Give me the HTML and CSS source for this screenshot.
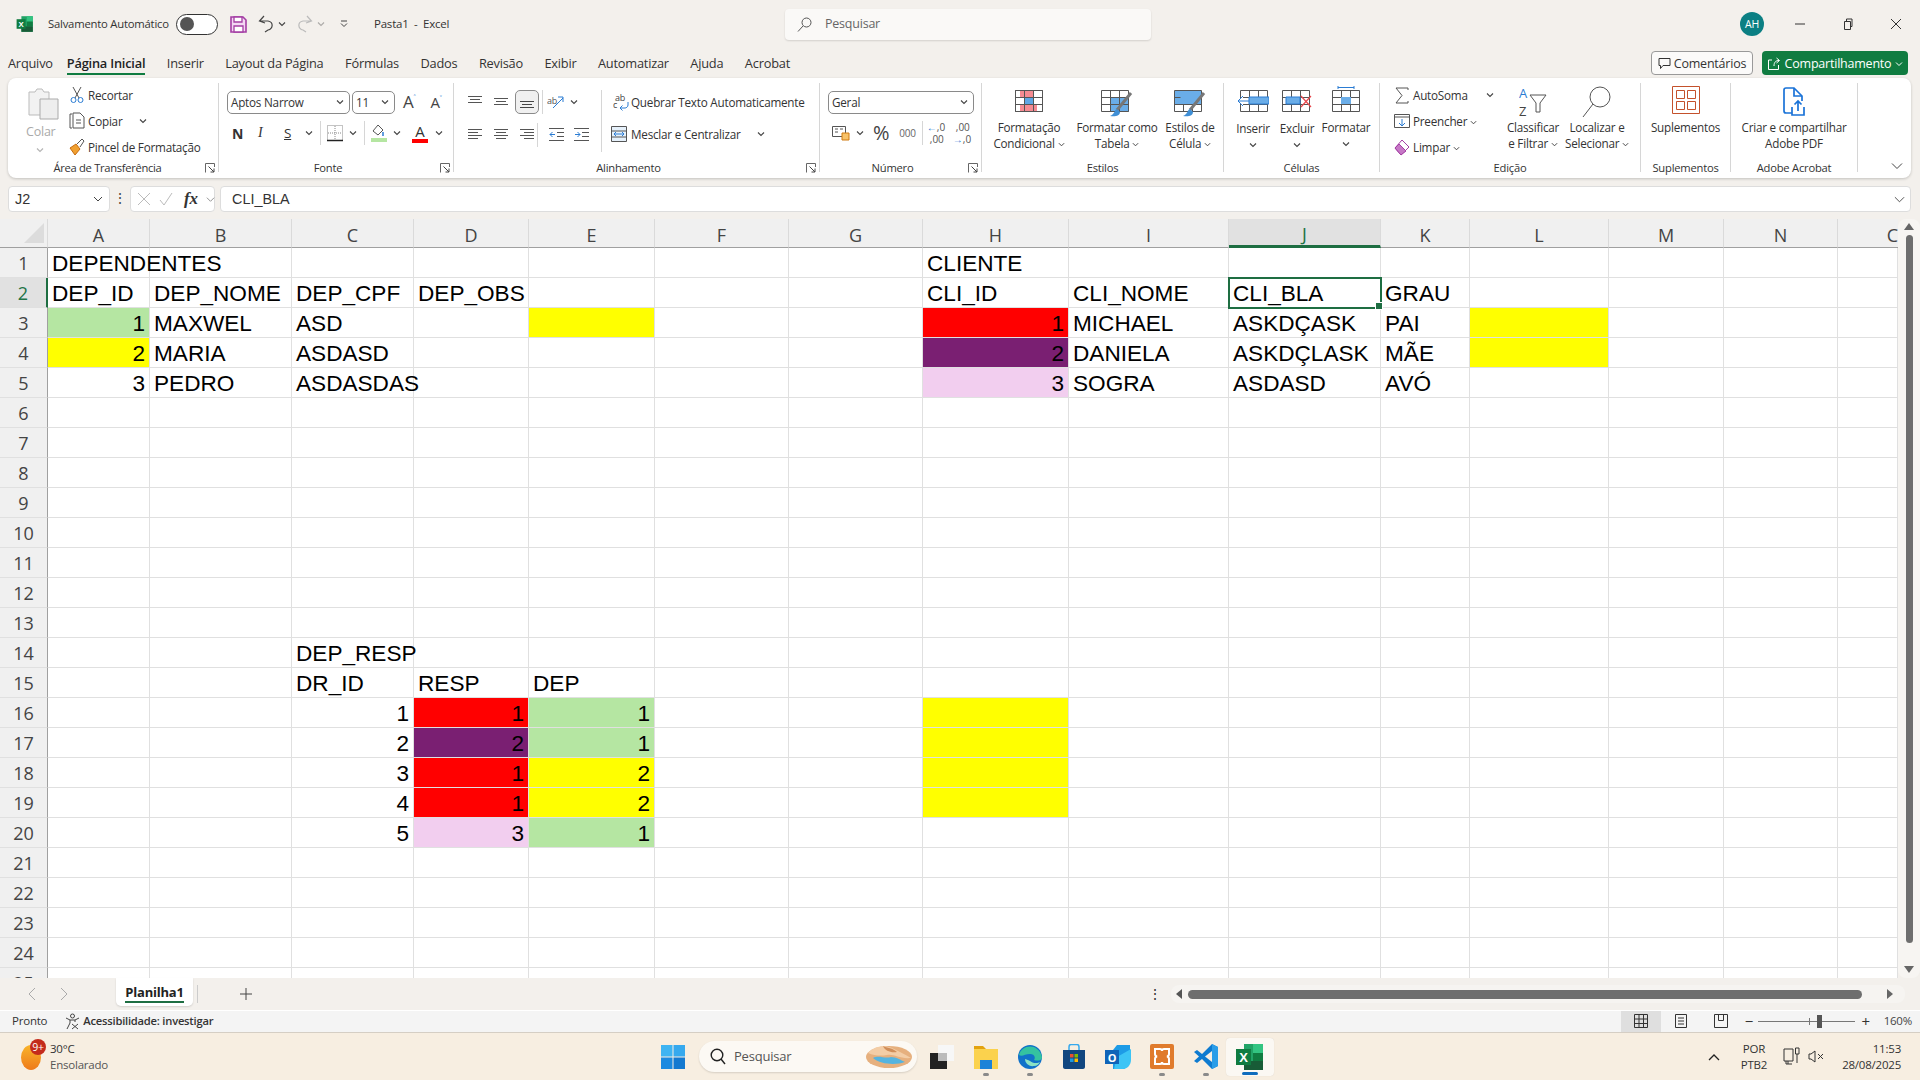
FILE: index.html
```html
<!DOCTYPE html>
<html lang="pt-BR">
<head>
<meta charset="utf-8">
<title>Pasta1 - Excel</title>
<link rel="stylesheet" href="styles.css">
</head>
<body>
<svg class="sprite" width="0" height="0">
<defs>
<symbol id="chev" viewBox="0 0 8 8"><path d="M1 2.5 4 5.5 7 2.5" fill="none" stroke="#444" stroke-width="1.1"/></symbol>
<symbol id="launch" viewBox="0 0 10 10"><path d="M.5 9.5V.5H9.5V4" fill="none" stroke="#666"/><path d="M3.5 3.5 9 9M9 5.5V9H5.5" fill="none" stroke="#444"/></symbol>
<symbol id="xl" viewBox="0 0 30 30"><path d="M9 2h19v26H9z" fill="#21a366"/><path d="M18 2h10v9H18z" fill="#33c481"/><path d="M18 11h10v8H18z" fill="#107c41"/><path d="M9 19h19v9H9z" fill="#185c37"/><path d="M1 7h15v16H1z" fill="#107c41"/><text x="8.5" y="20" class="xltext">X</text></symbol>
<symbol id="grid" viewBox="0 0 28 22"><path d="M.5.5h27v21H.5zM.5 7.5h27M.5 14.5h27M9.5.5v21M18.5.5v21" fill="none" stroke="#555"/></symbol>
</defs>
</svg>

<header class="titlebar">
  <div class="title-left">
    <svg class="xl-small" width="18" height="18"><use href="#xl"/></svg>
    <span class="autosave">Salvamento Automático</span>
    <span class="toggle"><span class="knob"></span></span>
    <svg class="save" width="17" height="17" viewBox="0 0 17 17"><path d="M1 1h12l3 3v12H1z" fill="#f3d8f3" stroke="#a43ea4" stroke-width="1.6"/><path d="M4 1h8v5H4zM4 10h9v6H4z" fill="#fff" stroke="#a43ea4" stroke-width="1.3"/></svg>
    <svg class="undo" width="16" height="18" viewBox="0 0 16 18"><path d="M6 1 1.500 6 7 8M2 6h8c6 1 5 8 0 9l-3 2" fill="none" stroke="#444" stroke-width="1.2"/></svg>
    <svg class="tchev" width="8" height="8"><use href="#chev"/></svg>
    <svg class="redo" width="16" height="18" viewBox="0 0 16 18"><path d="M10 1 14.500 6 9 8M14 6H6c-6 1-5 8 0 9l3 2" fill="none" stroke="#bbb" stroke-width="1.2"/></svg>
    <svg class="tchev dim" width="8" height="8"><use href="#chev"/></svg>
    <svg class="custom" width="8" height="8" viewBox="0 0 8 8"><path d="M1 1h6M1 3.500 4 6.500 7 3.500" fill="none" stroke="#444"/></svg>
    <span class="doc">Pasta1&nbsp; -&nbsp; Excel</span>
  </div>
  <div class="searchbox">
    <svg width="15" height="15" viewBox="0 0 15 15"><circle cx="9.500" cy="5.500" r="4.500" fill="none" stroke="#555"/><path d="M6 9 1 14.500" stroke="#555"/></svg>
    <span>Pesquisar</span>
  </div>
  <div class="title-right">
    <span class="avatar">AH</span>
    <svg class="win" width="12" height="12" viewBox="0 0 12 12"><path d="M1 6h10" stroke="#333"/></svg>
    <svg class="win" width="12" height="12" viewBox="0 0 12 12"><path d="M2.500 3.500h6v8h-6zM4.500 3V1h5.500v7.500H9" fill="none" stroke="#333"/></svg>
    <svg class="win" width="12" height="12" viewBox="0 0 12 12"><path d="M1 1 11 11M11 1 1 11" stroke="#333"/></svg>
  </div>
</header>

<nav class="tabs">
  <div class="tablist">
    <span class="tab t-first">Arquivo</span><span class="tab active">Página Inicial</span><span class="tab">Inserir</span><span class="tab">Layout da Página</span><span class="tab">Fórmulas</span><span class="tab">Dados</span><span class="tab">Revisão</span><span class="tab">Exibir</span><span class="tab">Automatizar</span><span class="tab">Ajuda</span><span class="tab">Acrobat</span>
  </div>
  <div class="tab-actions">
    <span class="btn-comment"><svg width="13" height="13" viewBox="0 0 13 13"><path d="M1 1.500h11v7H5L2.500 11.500v-3H1z" fill="none" stroke="#333"/></svg>Comentários</span>
    <span class="btn-share"><svg width="14" height="14" viewBox="0 0 14 14"><path d="M5 3H1.500v9.500h10V8M7 9c0-4 2-5.500 5-5.500M9.500 1 12.500 3.500 9.500 6" fill="none" stroke="#fff"/></svg>Compartilhamento<svg width="8" height="8" viewBox="0 0 8 8"><path d="M1 2.500 4 5.500 7 2.500" fill="none" stroke="#fff"/></svg></span>
  </div>
</nav>

<section class="ribbon">
  <div class="grp g-clip">
    <div class="body">
      <div class="paste">
        <svg width="34" height="33" viewBox="0 0 34 33"><path d="M4 5h6l2-3h5l2 3h5v23H4z" fill="#f2f2f2" stroke="#bbb"/><path d="M15 12h18v20H15z" fill="#eee" stroke="#aaa"/></svg>
        <span class="colar">Colar</span>
        <svg width="8" height="8" class="dim"><use href="#chev"/></svg>
      </div>
      <div class="stack">
        <div class="srow"><svg width="16" height="18" viewBox="0 0 16 18"><path d="M4 1 10 12M12 1 6 12" stroke="#555" fill="none"/><circle cx="4.500" cy="14" r="2.500" fill="none" stroke="#2b7cd3"/><circle cx="11.500" cy="14" r="2.500" fill="none" stroke="#2b7cd3"/></svg><span>Recortar</span></div>
        <div class="srow"><svg width="16" height="18" viewBox="0 0 16 18"><path d="M3 2H1v14h2" fill="none" stroke="#555"/><path d="M4 1h7l4 4v11H4z" fill="#fff" stroke="#555"/><path d="M7 8h5M7 11h5" stroke="#555"/></svg><span>Copiar</span><svg class="copy-chev" width="8" height="8"><use href="#chev"/></svg></div>
        <div class="srow"><svg width="16" height="18" viewBox="0 0 16 18"><path d="M1 10 7 6l4 5-5 6z" fill="#f0a030" stroke="#c66c10"/><path d="M8 6 13 1l2 2-4 6" fill="none" stroke="#555"/></svg><span>Pincel de Formatação</span></div>
      </div>
    </div>
    <div class="glabel"><span></span><span>Área de Transferência</span><svg width="10" height="10"><use href="#launch"/></svg></div>
  </div>

  <div class="grp g-font">
    <div class="body col">
      <div class="frow">
        <span class="combo c-font">Aptos Narrow<svg width="8" height="8"><use href="#chev"/></svg></span>
        <span class="combo c-size">11<svg width="8" height="8"><use href="#chev"/></svg></span>
        <span class="grow-a">A<sup>˄</sup></span>
        <span class="shrink-a">A<sup>˅</sup></span>
      </div>
      <div class="frow r2">
        <b class="fbold">N</b>
        <i class="fital">I</i>
        <span class="funder">S</span>
        <svg class="m1" width="8" height="8"><use href="#chev"/></svg>
        <span class="vsep"></span>
        <svg width="16" height="17" viewBox="0 0 16 17"><path d="M.5.500h15v15H.5z" fill="none" stroke="#888" stroke-dasharray="1 1"/><path d="M8 1v14M1 8h14" stroke="#888" stroke-dasharray="1 1"/><path d="M0 15.500h16" stroke="#222" stroke-width="1.500"/></svg>
        <svg class="m1" width="8" height="8"><use href="#chev"/></svg>
        <span class="vsep"></span>
        <svg width="16" height="18" viewBox="0 0 16 18"><path d="M7 1 2 7l5 4 5-5z" fill="none" stroke="#555"/><path d="M12 8v4" stroke="#2b7cd3" stroke-width="1.500"/><path d="M0 14h16v4H0z" fill="#b5e6a2"/></svg>
        <svg class="m1" width="8" height="8"><use href="#chev"/></svg>
        <span class="color-a">A</span>
        <svg class="m2" width="8" height="8"><use href="#chev"/></svg>
      </div>
    </div>
    <div class="glabel"><span></span><span>Fonte</span><svg width="10" height="10"><use href="#launch"/></svg></div>
  </div>

  <div class="grp g-align">
    <div class="body">
      <div class="al-left">
        <div class="alrow">
          <svg width="14" height="14" viewBox="0 0 14 14"><path d="M0 1.500h14M2 4.500h10M0 7.500h14" stroke="#555"/></svg>
          <svg width="14" height="14" viewBox="0 0 14 14"><path d="M0 3.500h14M2 6.500h10M0 9.500h14" stroke="#555"/></svg>
          <span class="al-sel"><svg width="14" height="14" viewBox="0 0 14 14"><path d="M0 6.500h14M2 9.500h10M0 12.500h14" stroke="#444"/></svg></span>
          <span class="vsep tight"></span>
          <svg class="orient" width="17" height="16" viewBox="0 0 17 16"><text x="0" y="10" class="orient-t">ab</text><path d="M6 14 16 4M11 3h5v5" fill="none" stroke="#2b7cd3"/></svg>
          <svg class="m1" width="8" height="8"><use href="#chev"/></svg>
        </div>
        <div class="alrow low">
          <svg width="14" height="14" viewBox="0 0 14 14"><path d="M0 1.500h14M0 4.500h10M0 7.500h14M0 10.500h10" stroke="#555"/></svg>
          <svg width="14" height="14" viewBox="0 0 14 14"><path d="M0 1.500h14M2 4.500h10M0 7.500h14M2 10.500h10" stroke="#555"/></svg>
          <svg class="r-al" width="14" height="14" viewBox="0 0 14 14"><path d="M0 1.500h14M4 4.500h10M0 7.500h14M4 10.500h10" stroke="#555"/></svg>
          <span class="vsep tight"></span>
          <svg width="15" height="14" viewBox="0 0 15 14"><path d="M0 .5h15M8 4.500h7M8 8.500h7M0 12.500h15" stroke="#555"/><path d="M6 6.500H1M3.500 4 1 6.500 3.500 9" fill="none" stroke="#2b7cd3"/></svg>
          <svg width="15" height="14" viewBox="0 0 15 14"><path d="M0 .5h15M8 4.500h7M8 8.500h7M0 12.500h15" stroke="#555"/><path d="M1 6.500h5M3.500 4 6 6.500 3.500 9" fill="none" stroke="#2b7cd3"/></svg>
        </div>
      </div>
      <span class="vsep full"></span>
      <div class="al-right">
        <div class="srow wr"><svg class="wrapic" width="16" height="22" viewBox="0 0 16 22"><text x="2" y="11" class="wrap-t">ab</text><text x="0" y="18" class="wrap-t">c</text><path d="M15 12v3c0 2-2 3-3 3H7M9.500 15.500 7 18l2.500 2.500" fill="none" stroke="#2b7cd3"/></svg><span>Quebrar Texto Automaticamente</span></div>
        <div class="srow wr"><svg width="16" height="16" viewBox="0 0 16 16"><path d="M.5.500h15v15H.5zM.5 5h15M.5 11h15" fill="#e6f1fb" stroke="#555"/><path d="M3 8h10M5 6 3 8l2 2M11 6l2 2-2 2" fill="none" stroke="#2b7cd3"/></svg><span>Mesclar e Centralizar</span><svg class="merge-chev" width="8" height="8"><use href="#chev"/></svg></div>
      </div>
    </div>
    <div class="glabel"><span></span><span>Alinhamento</span><svg width="10" height="10"><use href="#launch"/></svg></div>
  </div>

  <div class="grp g-num">
    <div class="body col">
      <div class="frow"><span class="combo c-num">Geral<svg width="8" height="8"><use href="#chev"/></svg></span></div>
      <div class="frow r2 numr">
        <svg width="18" height="16" viewBox="0 0 18 16"><path d="M.5 1.500h13v10H.5z" fill="none" stroke="#555"/><path d="M3 4h3M8 4h3M3 7h3" stroke="#555"/><path d="M10 8h7v7h-7z" fill="#f7c26a" stroke="#d07a10"/></svg>
        <svg class="m1" width="8" height="8"><use href="#chev"/></svg>
        <span class="pct">%</span>
        <span class="thou">000</span>
        <span class="vsep"></span>
        <span class="dec"><span class="ar">←</span>,0<br>,00</span>
        <span class="dec two">,00<br><span class="ar">→</span>,0</span>
      </div>
    </div>
    <div class="glabel"><span></span><span>Número</span><svg width="10" height="10"><use href="#launch"/></svg></div>
  </div>

  <div class="grp g-styles">
    <div class="body">
      <div class="big w76"><span class="bigicon"><svg width="28" height="22"><use href="#grid"/><path d="M5 1h13v6H5zM5 15h17v6H5z" fill="#f58b92"/><path d="M9 8h9v6H9z" fill="#5ea6e5"/><use href="#grid"/></svg></span><span>Formatação</span><span>Condicional <svg width="7" height="7"><use href="#chev"/></svg></span></div>
      <div class="big w100"><span class="bigicon"><svg width="32" height="28" viewBox="0 0 32 28"><path d="M10 8h18v14H10z" fill="#6aade8"/><path d="M.5.500h27v21H.5zM.5 7.500h27M.5 14.500h27M9.500.5v21M18.500.5v21" fill="none" stroke="#555"/><path d="M30 3 16 20" stroke="#777" stroke-width="3"/><path d="M16 19c-3 1-2 5-7 7 5 1 10 0 10-4z" fill="#3f8fd6"/></svg></span><span>Formatar como</span><span>Tabela <svg width="7" height="7"><use href="#chev"/></svg></span></div>
      <div class="big w46"><span class="bigicon"><svg width="32" height="28" viewBox="0 0 32 28"><path d="M1 1h26v13H1z" fill="#6aade8"/><path d="M.5.500h27v21H.5zM.5 14.500h27M.5 7.500h6M9.500 14.500v7M18.500 14.500v7" fill="none" stroke="#555"/><path d="M30 3 16 20" stroke="#777" stroke-width="3"/><path d="M16 19c-3 1-2 5-7 7 5 1 10 0 10-4z" fill="#3f8fd6"/></svg></span><span>Estilos de</span><span>Célula <svg width="7" height="7"><use href="#chev"/></svg></span></div>
    </div>
    <div class="glabel center"><span>Estilos</span></div>
  </div>

  <div class="grp g-cells">
    <div class="body">
      <div class="big w44"><span class="bigicon"><svg width="32" height="22" viewBox="0 0 32 22"><path d="M3.500.500h27v21h-27zM3.500 7.500h27M3.500 14.500h27M12.500.5v21M21.500.5v21" fill="none" stroke="#555"/><path d="M12 7h20v7H12z" fill="#6aade8" stroke="#2b7cd3"/><path d="M12 11H1M6 6 1 11l5 5" fill="#fff" stroke="#2b7cd3"/></svg></span><span class="ins">Inserir</span><svg class="bchev" width="8" height="8"><use href="#chev"/></svg></div>
      <div class="big w44"><span class="bigicon"><svg width="30" height="22" viewBox="0 0 30 22"><path d="M.5.500h27v21H.5zM.5 7.500h27M.5 14.500h27M9.500.5v21M18.500.5v21" fill="none" stroke="#555"/><path d="M4 7h14v7H4z" fill="#6aade8" stroke="#2b7cd3"/><path d="M19 6 29 17M29 6 19 17" stroke="#e8474c" stroke-width="1.200"/></svg></span><span class="ins">Excluir</span><svg class="bchev" width="8" height="8"><use href="#chev"/></svg></div>
      <div class="big w54"><span class="bigicon"><svg class="fmticon" width="28" height="26" viewBox="0 0 28 26"><path d="M6 1.500h16M6 0v3M22 0v3" stroke="#2b7cd3"/><path d="M.5 4.500h27v21H.5zM.5 11.500h27M.5 18.500h27M9.500 4.500v21M18.500 4.500v21" fill="none" stroke="#555"/><path d="M9 11h10v7H9z" fill="#6aade8"/></svg></span><span>Formatar</span><svg class="bchev" width="8" height="8"><use href="#chev"/></svg></div>
    </div>
    <div class="glabel center"><span>Células</span></div>
  </div>

  <div class="grp g-edit">
    <div class="body">
      <div class="stack w109">
        <div class="srow e"><svg width="16" height="17" viewBox="0 0 16 17"><path d="M14 3V1H2l6 7.500L2 16h12v-2" fill="none" stroke="#555"/></svg><span>AutoSoma</span><svg class="auto-chev" width="8" height="8"><use href="#chev"/></svg></div>
        <div class="srow e"><svg width="16" height="16" viewBox="0 0 16 16"><path d="M.5 1.500h15v13H.5zM.5 4h15" fill="none" stroke="#555"/><path d="M8 6v7M5 10l3 3 3-3" fill="none" stroke="#2b7cd3"/></svg><span>Preencher <svg width="7" height="7"><use href="#chev"/></svg></span></div>
        <div class="srow e"><svg width="16" height="17" viewBox="0 0 16 17"><path d="M8 1 15 8 7 16 1 9z" fill="#fff" stroke="#a43ea4"/><path d="M1 9 5 5l7 7-5 4z" fill="#c678c6" stroke="#a43ea4"/></svg><span>Limpar <svg width="7" height="7"><use href="#chev"/></svg></span></div>
      </div>
      <div class="big w60"><span class="bigicon tall"><svg class="sorticon" width="28" height="38" viewBox="0 0 28 38"><text x="0" y="15" class="sort-a">A</text><text x="0" y="33" class="sort-z">Z</text><path d="M11 12h16l-6 8v9h-4v-9z" fill="none" stroke="#555"/></svg></span><span>Classificar</span><span>e Filtrar <svg width="7" height="7"><use href="#chev"/></svg></span></div>
      <div class="big w68"><span class="bigicon tall"><svg width="30" height="32" viewBox="0 0 30 32"><circle cx="18" cy="11" r="10" fill="#fff" stroke="#555"/><path d="M11 18 1 31" stroke="#555"/></svg></span><span>Localizar e</span><span>Selecionar <svg width="7" height="7"><use href="#chev"/></svg></span></div>
    </div>
    <div class="glabel center"><span>Edição</span></div>
  </div>

  <div class="grp g-sup">
    <div class="body center-body">
      <div class="big full"><span class="bigicon tall"><svg width="28" height="28" viewBox="0 0 28 28"><path d="M.5.500h27v27H.5z" fill="none" stroke="#c4512b"/><path d="M4.500 4.500h8v8h-8zM15.500 4.500h8v8h-8zM4.500 15.500h8v8h-8zM15.500 15.500h8v8h-8z" fill="none" stroke="#c4512b"/></svg></span><span>Suplementos</span></div>
    </div>
    <div class="glabel center"><span>Suplementos</span></div>
  </div>

  <div class="grp g-pdf">
    <div class="body center-body">
      <div class="big full"><span class="bigicon tall"><svg width="24" height="32" viewBox="0 0 24 32"><path d="M10 27H4c-1 0-2-1-2-2V4c0-1 1-2 2-2h8l8 8v5" fill="none" stroke="#1a73d8" stroke-width="1.700"/><path d="M12 2v8h8" fill="none" stroke="#1a73d8" stroke-width="1.700"/><path d="M10 21v8h12v-8M16 25V15M12.500 18.500 16 15l3.500 3.500" fill="none" stroke="#1a73d8" stroke-width="1.700"/></svg></span><span>Criar e compartilhar</span><span>Adobe PDF</span></div>
    </div>
    <div class="glabel center"><span>Adobe Acrobat</span></div>
  </div>
  <div class="collapse"><svg width="12" height="12" viewBox="0 0 12 12"><path d="M1 3.500 6 8.500 11 3.500" fill="none" stroke="#444"/></svg></div>
</section>

<section class="formula">
  <div class="namebox"><span>J2</span><svg width="10" height="10" viewBox="0 0 10 10"><path d="M1 3 5 7 9 3" fill="none" stroke="#444"/></svg></div>
  <span class="fdots">⋮</span>
  <div class="fxbox">
    <svg width="14" height="14" viewBox="0 0 14 14"><path d="M1 1 13 13M13 1 1 13" stroke="#bbb"/></svg>
    <svg width="14" height="14" viewBox="0 0 14 14"><path d="M1 8 5 13 13 1" fill="none" stroke="#bbb"/></svg>
    <i class="fx">fx</i>
    <svg width="9" height="9" viewBox="0 0 10 10"><path d="M1 3 5 7 9 3" fill="none" stroke="#888"/></svg>
  </div>
  <div class="fcontent"><span>CLI_BLA</span><svg width="11" height="11" viewBox="0 0 12 12"><path d="M1 3.500 6 8.500 11 3.500" fill="none" stroke="#444"/></svg></div>
</section>

<main class="sheet">
  <div class="gridwrap">
    <table class="cells">
      <colgroup><col class="c0"><col class="ca"><col class="cb"><col class="cc"><col class="cd"><col class="ce"><col class="cf"><col class="cg"><col class="ch"><col class="ci"><col class="cj"><col class="ck"><col class="cl"><col class="cm"><col class="cn"><col class="co"></colgroup>
      <thead>
        <tr><th class="corner"><svg width="20" height="20" viewBox="0 0 20 20"><path d="M20 0V20H0z" fill="#dcdcdc"/></svg></th><th>A</th><th>B</th><th>C</th><th>D</th><th>E</th><th>F</th><th>G</th><th>H</th><th>I</th><th class="hsel">J</th><th>K</th><th>L</th><th>M</th><th>N</th><th>C</th></tr>
      </thead>
      <tbody>
        <tr><th>1</th><td>DEPENDENTES<td><td><td><td><td><td><td>CLIENTE<td><td><td><td><td><td><td></tr>
        <tr><th class="rsel">2</th><td>DEP_ID<td>DEP_NOME<td>DEP_CPF<td>DEP_OBS<td><td><td><td>CLI_ID<td>CLI_NOME<td class="sel">CLI_BLA<td>GRAU<td><td><td><td></tr>
        <tr><th>3</th><td class="n green">1<td>MAXWEL<td>ASD<td><td class="yellow"><td><td><td class="n red">1<td>MICHAEL<td>ASKDÇASK<td>PAI<td class="yellow"><td><td><td></tr>
        <tr><th>4</th><td class="n yellow">2<td>MARIA<td>ASDASD<td><td><td><td><td class="n purple">2<td>DANIELA<td>ASKDÇLASK<td>MÃE<td class="yellow"><td><td><td></tr>
        <tr><th>5</th><td class="n">3<td>PEDRO<td>ASDASDAS<td><td><td><td><td class="n pink">3<td>SOGRA<td>ASDASD<td>AVÓ<td><td><td><td></tr>
        <tr><th>6</th><td><td><td><td><td><td><td><td><td><td><td><td><td><td><td></tr>
        <tr><th>7</th><td><td><td><td><td><td><td><td><td><td><td><td><td><td><td></tr>
        <tr><th>8</th><td><td><td><td><td><td><td><td><td><td><td><td><td><td><td></tr>
        <tr><th>9</th><td><td><td><td><td><td><td><td><td><td><td><td><td><td><td></tr>
        <tr><th>10</th><td><td><td><td><td><td><td><td><td><td><td><td><td><td><td></tr>
        <tr><th>11</th><td><td><td><td><td><td><td><td><td><td><td><td><td><td><td></tr>
        <tr><th>12</th><td><td><td><td><td><td><td><td><td><td><td><td><td><td><td></tr>
        <tr><th>13</th><td><td><td><td><td><td><td><td><td><td><td><td><td><td><td></tr>
        <tr><th>14</th><td><td><td>DEP_RESP<td><td><td><td><td><td><td><td><td><td><td><td></tr>
        <tr><th>15</th><td><td><td>DR_ID<td>RESP<td>DEP<td><td><td><td><td><td><td><td><td><td></tr>
        <tr><th>16</th><td><td><td class="n">1<td class="n red">1<td class="n green">1<td><td><td class="yellow"><td><td><td><td><td><td><td></tr>
        <tr><th>17</th><td><td><td class="n">2<td class="n purple">2<td class="n green">1<td><td><td class="yellow"><td><td><td><td><td><td><td></tr>
        <tr><th>18</th><td><td><td class="n">3<td class="n red">1<td class="n yellow">2<td><td><td class="yellow"><td><td><td><td><td><td><td></tr>
        <tr><th>19</th><td><td><td class="n">4<td class="n red">1<td class="n yellow">2<td><td><td class="yellow"><td><td><td><td><td><td><td></tr>
        <tr><th>20</th><td><td><td class="n">5<td class="n pink">3<td class="n green">1<td><td><td><td><td><td><td><td><td><td></tr>
        <tr><th>21</th><td><td><td><td><td><td><td><td><td><td><td><td><td><td><td></tr>
        <tr><th>22</th><td><td><td><td><td><td><td><td><td><td><td><td><td><td><td></tr>
        <tr><th>23</th><td><td><td><td><td><td><td><td><td><td><td><td><td><td><td></tr>
        <tr><th>24</th><td><td><td><td><td><td><td><td><td><td><td><td><td><td><td></tr>
        <tr><th>25</th><td><td><td><td><td><td><td><td><td><td><td><td><td><td><td></tr>
      </tbody>
    </table>
  </div>
  <div class="vscroll">
    <span class="arrow-up"></span>
    <span class="vthumb"></span>
    <span class="arrow-down"></span>
  </div>
</main>

<section class="sheetbar">
  <div class="navs">
    <svg width="10" height="14" viewBox="0 0 10 14"><path d="M8 1 2 7l6 6" fill="none" stroke="#aaa"/></svg>
    <svg width="10" height="14" viewBox="0 0 10 14"><path d="M2 1l6 6-6 6" fill="none" stroke="#aaa"/></svg>
  </div>
  <div class="sheettab"><b>Planilha1</b></div>
  <span class="tabsep"></span>
  <svg class="plus" width="12" height="12" viewBox="0 0 12 12"><path d="M6 0v12M0 6h12" stroke="#444"/></svg>
  <span class="hdots">⋮</span>
  <div class="hscroll">
    <span class="arrow-left"></span>
    <span class="hthumb"></span>
    <span class="arrow-right"></span>
  </div>
</section>

<footer class="status">
  <span class="pronto">Pronto</span>
  <svg class="acc" width="15" height="17" viewBox="0 0 15 17"><circle cx="7.500" cy="3" r="2" fill="none" stroke="#444"/><path d="M1 5l4 2h5l4-2M5 7v3l-3 6M10 7v2M7 11l6 5M13 11l-6 5" fill="none" stroke="#444"/></svg>
  <b class="acctext">Acessibilidade: investigar</b>
  <div class="st-right">
    <span class="view on"><svg width="14" height="14" viewBox="0 0 14 14"><path d="M.5.500h13v13H.5zM.5 5h13M.5 9.500h13M5 .5v13M9.500.5v13" fill="none" stroke="#333"/></svg></span>
    <span class="view"><svg width="14" height="14" viewBox="0 0 14 14"><path d="M1.500.500h11v13h-11z" fill="none" stroke="#333"/><path d="M4 4h6M4 7h6M4 10h6" stroke="#333"/></svg></span>
    <span class="view"><svg width="14" height="14" viewBox="0 0 14 14"><path d="M.5.500h13v13H.5zM4.500.5v6h5v-6" fill="none" stroke="#333"/></svg></span>
    <span class="zminus">−</span>
    <span class="zslider"><span class="ztick"></span><span class="zthumb"></span></span>
    <span class="zplus">+</span>
    <span class="zpct">160%</span>
  </div>
</footer>

<footer class="taskbar">
  <div class="weather">
    <span class="sun"><span class="badge">9+</span></span>
    <div class="wtext"><span>30°C</span><span class="wsub">Ensolarado</span></div>
  </div>
  <div class="taskcenter">
    <svg width="24" height="24" viewBox="0 0 24 24"><path d="M0 0h11.500v11.500H0z" fill="#3fb4f2"/><path d="M12.500 0H24v11.500H12.500z" fill="#36a9ee"/><path d="M0 12.500h11.500V24H0z" fill="#1c8ae0"/><path d="M12.500 12.500H24V24H12.500z" fill="#1479d0"/></svg>
    <div class="tsearch">
      <svg width="16" height="17" viewBox="0 0 16 17"><circle cx="7" cy="7" r="5.800" fill="none" stroke="#222" stroke-width="1.400"/><path d="M11 11l4 5" stroke="#222" stroke-width="1.400"/></svg>
      <span>Pesquisar</span>
      <svg class="dunes" width="48" height="26" viewBox="0 0 48 26"><ellipse cx="24" cy="14" rx="23" ry="11" fill="#e6b07e"/><path d="M3 10c8-8 18-8 26-4 6 3 12 6 17 9-12 1-16-4-24-3-6 1-12 1-19-2z" fill="#f3cda6"/><path d="M8 15c6-3 12 1 18-1 5 0 10 3 14 5-8 3-24 3-32-4z" fill="#55b4e0"/><path d="M18 3c4 2 10 2 14 6-6 1-12-1-14-6z" fill="#d08e5a"/></svg>
    </div>
    <div class="app a-first"><svg width="24" height="24" viewBox="0 0 24 24"><path d="M8 0h16v16H8z" fill="#eee"/><path d="M8 0h16v16H8z" fill="#fff" opacity=".5"/><path d="M0 8h17v17H0z" fill="#222"/><path d="M8 8h9v8H8z" fill="#bbb"/></svg></div>
    <div class="app"><svg width="26" height="24" viewBox="0 0 26 24"><path d="M1 1h9l3 3H1z" fill="#e3a20e"/><path d="M1 4h24v20H1z" fill="#fbd24d"/><path d="M7 15h12v9H7z" fill="#1c83d8"/></svg><i class="dot"></i></div>
    <div class="app"><svg width="24" height="24" viewBox="0 0 24 24"><circle cx="12" cy="12" r="12" fill="#1172c9"/><path d="M1 10C3 2 13-1 19 4c3 2 5 6 5 9-1 3-5 3-8 2 2-3 0-6-4-6-5 0-8 3-11 1z" fill="#35c2a0"/><path d="M7 14c0 4 4 8 9 7 3 0 5-2 6-4-3 2-8 1-10-1-2-1-4-2-5-2z" fill="#8be2c4"/></svg><i class="dot"></i></div>
    <div class="app"><svg width="24" height="25" viewBox="0 0 24 25"><path d="M7 7V3c0-1.500 1-2.500 2-2.500h6c1 0 2 1 2 2.500v4" fill="none" stroke="#36a9ee" stroke-width="1.500"/><path d="M1 6h22v17c0 1-1 2-2 2H3c-1 0-2-1-2-2z" fill="#11467f"/><path d="M8 10h3.500v3.500H8z" fill="#e8502f"/><path d="M12.500 10H16v3.500h-3.500z" fill="#7fba00"/><path d="M8 14.500h3.500V18H8z" fill="#1c9ae0"/><path d="M12.500 14.500H16V18h-3.500z" fill="#ffb900"/></svg></div>
    <div class="app"><svg width="26" height="24" viewBox="0 0 26 24"><path d="M12 0h13v14c0 3-2 8-6 10H8V5z" fill="#1d9be6"/><path d="M12 12 26 4v11c0 5-4 9-8 9H9z" fill="#3cc4f5"/><path d="M0 5h14v14H0z" fill="#0f64b8"/><text x="7" y="16.500" class="o-t">O</text></svg></div>
    <div class="app"><svg width="24" height="25" viewBox="0 0 24 25"><rect width="24" height="25" rx="2" fill="#e07b2c"/><path d="M5 5h5c2 0 2 2 2 2s0-2 2-2h5v5c0 2-2 2.500-2 2.500s2 .5 2 2.500v5h-5c-2 0-2-2-2-2s0 2-2 2H5v-5c0-2 2-2.500 2-2.500S5 12 5 10z" fill="none" stroke="#fff" stroke-width="2"/></svg><i class="dot"></i></div>
    <div class="app"><svg width="25" height="25" viewBox="0 0 25 25"><path d="M18 0 8 10 3 6 0 8l5 4.500L0 17l3 2 5-4 10 10 6-3V3z" fill="#0e7bd0"/><path d="M18 7v11l-7-5.500z" fill="#f7efe3"/><path d="M18 0l6 3v19l-6 3z" fill="#2a9de8"/></svg><i class="dot"></i></div>
    <div class="app current"><svg width="30" height="30"><use href="#xl"/></svg><i class="bar"></i></div>
  </div>
  <div class="tray">
    <svg width="12" height="8" viewBox="0 0 12 8"><path d="M1 7 6 2l5 5" fill="none" stroke="#222" stroke-width="1.300"/></svg>
    <div class="lang"><span>POR</span><span>PTB2</span></div>
    <svg class="net" width="17" height="19" viewBox="0 0 17 19"><path d="M1 2h9v12H1zM3 14v3h6M5 14v3" fill="none" stroke="#333"/><path d="M12.500 1h3.500v6h-3.500zM14 7v9" fill="none" stroke="#333"/></svg>
    <svg class="snd" width="16" height="13" viewBox="0 0 16 13"><path d="M1 4h2l4-3v11L3 9H1z" fill="none" stroke="#333"/><path d="M10 4l5 5M15 4l-5 5" stroke="#333"/></svg>
    <div class="clock"><span>11:53</span><span>28/08/2025</span></div>
  </div>
</footer>
</body>
</html>
```
FILE: styles.css
```css
* { box-sizing: border-box; }
html, body { margin: 0; height: 100%; }
body {
  width: 1920px; height: 1080px; overflow: hidden;
  background: #f3f0ec; color: #333;
  font: 12px/16px "Open Sans", "Noto Sans", sans-serif;
  letter-spacing: -.22px;
}
.sprite { position: absolute; }
svg { display: block; flex: none; }
span svg { display: inline-block; }
.xltext { font: 700 13px "Liberation Sans", sans-serif; fill: #fff; text-anchor: middle; }

/* Title bar */
.titlebar { height: 48px; display: grid; grid-template-columns: 785px 366px 1fr; align-items: center; }
.title-left { display: flex; align-items: center; padding-left: 16px; }
.autosave { margin-left: 14px; font-size: 11.300px; width: 122px; white-space: nowrap; }
.toggle { width: 42px; height: 21px; margin-left: 6px; border: 1.500px solid #333; border-radius: 11px; background: #fff; display: flex; align-items: center; padding-left: 3px; }
.knob { width: 14px; height: 14px; background: #555; border-radius: 50%; }
.save { margin-left: 12px; }
.undo { margin-left: 11px; }
.tchev { margin-left: 4px; }
.redo { margin-left: 11px; }
.dim { opacity: .4; }
.custom { margin-left: 15px; }
.doc { margin-left: 26px; font-size: 11.500px; white-space: nowrap; }
.searchbox { height: 31px; background: #faf9f7; border-radius: 4px; box-shadow: 0 1px 2px #0002; display: flex; align-items: center; padding-left: 12px; gap: 13px; color: #666; font-size: 12.500px; }
.title-right { display: flex; align-items: center; justify-content: flex-end; padding-right: 18px; }
.avatar { width: 24px; height: 24px; border-radius: 50%; background: #0b7f83; color: #fff; font-size: 10.500px; display: flex; align-items: center; justify-content: center; margin-right: 30px; }
.win { margin-left: 36px; }
.win:first-of-type { margin-left: 0; }

/* Tabs */
.tabs { height: 27px; padding: 3px 12px 0 8px; display: flex; justify-content: space-between; align-items: center; }
.tablist { display: flex; gap: 21.500px; font-size: 12.800px; white-space: nowrap; }
.tab { height: 24px; line-height: 25px; }
.t-first { margin-right: -7.500px; }
.active { font-weight: 600; color: #222; border-bottom: 2px solid #107c41; letter-spacing: -.2px; }
.tab-actions { display: flex; gap: 9px; font-size: 12.500px; }
.btn-comment { width: 102px; height: 24px; padding-top: 1px; background: #fbfaf9; border: 1px solid #999; border-radius: 4px; display: flex; align-items: center; justify-content: center; gap: 3px; }
.btn-share { width: 146px; height: 24px; padding-top: 1px; background: #107c41; color: #fff; border-radius: 4px; display: flex; align-items: center; justify-content: center; gap: 4px; white-space: nowrap; }

/* Ribbon */
.ribbon { height: 100px; margin: 3px 9px 0 8px; padding: 5px 0 6px; background: #fff; border-radius: 8px; box-shadow: 0 1px 3px #0003; display: flex; white-space: nowrap; font-size: 11.700px; }
.grp { border-right: 1px solid #d6d6d6; display: flex; flex-direction: column; height: 89px; }
.body { height: 78px; display: flex; }
.body.col { flex-direction: column; padding-top: 7px; }
.glabel { height: 11px; line-height: 13px; display: grid; grid-template-columns: 1fr auto 1fr; padding-right: 16px; align-items: center; font-size: 11.200px; color: #333; }
.g-clip .glabel { padding-right: 11px; letter-spacing: -.3px; }
.glabel svg { justify-self: end; margin-right: -13px; }
.g-clip .glabel svg { margin-right: -8px; }
.glabel.center { grid-template-columns: 1fr; text-align: center; padding: 0; }
.g-clip { width: 211px; }
.g-font { width: 235px; }
.g-align { width: 366px; }
.g-num { width: 162px; }
.g-styles { width: 242px; }
.g-cells { width: 156px; }
.g-edit { width: 261px; }
.g-sup { width: 90px; }
.g-pdf { width: 127px; }
.collapse { flex: 1; display: flex; align-items: flex-end; justify-content: flex-end; padding: 0 8px 0 0; }

.paste { width: 44px; margin-left: 17px; padding-top: 4px; display: flex; flex-direction: column; align-items: flex-start; }
.colar { color: #aaa; margin: 4px 0 0 1px; font-size: 12.500px; }
.paste .dim { margin: 6px 0 0 11px; }
.stack { display: flex; flex-direction: column; margin-top: -1px; }
.srow { height: 26px; display: flex; align-items: center; gap: 3px; }
.copy-chev { margin-left: 14px; }
.frow { display: flex; align-items: center; height: 24px; padding-left: 8px; }
.r2 { margin-top: 7px; }
.combo { height: 23px; border: 1px solid #8a8a8a; border-radius: 5px; display: flex; align-items: center; justify-content: space-between; padding: 0 5px 0 3px; }
.c-font { width: 123px; }
.c-size { width: 43px; margin-left: 2px; }
.c-num { width: 146px; }
.grow-a, .shrink-a { font-size: 17px; color: #444; margin-left: 8px; }
.shrink-a { font-size: 15px; margin-left: 15px; }
sup { font-size: 8px; line-height: 0; color: #2b7cd3; }
.fbold { width: 26px; font: 700 14px "Open Sans", sans-serif; margin-left: 5px; }
.fital { width: 26px; font: italic 14px "Liberation Serif", serif; }
.funder { width: 15px; text-decoration: underline; font-size: 13.500px; }
.m1 { margin: 0 1px 0 6px; }
.m2 { margin-left: 7px; }
.vsep { width: 1px; height: 24px; background: #d6d6d6; margin: 0 6px; }
.vsep.tight { margin: 0 6px 0 3px; }
.vsep.full { height: 62px; margin: 7px 0 0 7px; }
.color-a { width: 16px; margin-left: 10px; border-bottom: 4px solid #f00; text-align: center; font-size: 15px; line-height: 15px; }
.al-left { padding: 7px 0 0 14px; display: flex; flex-direction: column; width: 140px; }
.alrow { display: flex; align-items: center; height: 24px; gap: 12px; }
.alrow.low { margin-top: 9px; gap: 12px; }
.alrow .vsep { margin: 0 -5px 0 -9px; }
.alrow.low .vsep { margin: 0 -1px 0 -9px; }
.alrow.low svg:last-child { margin-left: -2px; }
.al-sel { width: 24px; height: 24px; margin-left: -5px; background: #f0f0f0; border: 1px solid #8a8a8a; border-radius: 5px; display: flex; align-items: center; justify-content: center; }
.r-al { margin-left: 0; }
.orient { margin-left: -3px; }
.alrow .m1 { margin: 0 0 0 -6px; }
.orient-t { font: 9px "Open Sans", sans-serif; fill: #555; }
.wrap-t { font: 9px "Open Sans", sans-serif; fill: #444; }
.al-right { padding: 7px 0 0 9px; display: flex; flex-direction: column; }
.srow.wr { height: 24px; gap: 4px; line-height: 18px; }
.srow.wr + .srow.wr { margin-top: 8px; }
.wrapic { margin: -3px -2px 0 2px; }
.merge-chev { margin-left: 12px; }
.numr { padding-left: 12px; }
.pct { font-size: 20px; margin: 0 10px 0 8px; color: #444; }
.thou { font-size: 10px; color: #666; }
.dec { font: 10px/12px "Open Sans", sans-serif; color: #555; margin-left: -2px; text-align: right; letter-spacing: 0; width: 17px; }
.dec.two { margin-left: 9px; }
.ar { color: #2b7cd3; font-size: 10px; }
.g-styles .body { padding-left: 9px; }
.g-cells .body { padding-left: 7px; }
.big { display: flex; flex-direction: column; align-items: center; height: 76px; }
.bigicon { height: 36px; display: flex; align-items: flex-start; padding-top: 7px; }
.bigicon.tall { padding-top: 3px; }
.fmticon { margin-top: -4px; }
.sorticon { margin-top: -3px; }
.w76 { width: 76px; }
.w100 { width: 100px; }
.w46 { width: 46px; }
.w44 { width: 44px; }
.w54 { width: 54px; }
.w60 { width: 60px; }
.w68 { width: 68px; }
.w109 { width: 109px; }
.bchev { margin-top: 5px; }
.ins { margin-top: 1px; }
.g-edit .body { padding-left: 14px; }
.srow.e { gap: 3px; }
.auto-chev { margin-left: 15px; }
.big.full { width: 100%; }

/* Formula bar */
.formula { height: 26px; margin: 8px 9px 0 8px; display: flex; align-items: stretch; }
.namebox, .fxbox, .fcontent { background: #fff; border: 1px solid #ddd; border-radius: 4px; display: flex; align-items: center; }
.namebox { width: 102px; padding: 0 6px; justify-content: space-between; font: 14.400px "Liberation Sans", sans-serif; letter-spacing: 0; }
.fdots { width: 20px; text-align: center; line-height: 24px; font-size: 14px; color: #444; }
.fxbox { width: 85px; padding: 0 5px 0 6px; gap: 8px; }
.fx { font: italic 700 17px "Liberation Serif", serif; color: #333; margin-left: 3px; }
.fcontent { flex: 1; margin-left: 5px; padding: 0 5px 0 11px; justify-content: space-between; font: 14.400px "Liberation Sans", sans-serif; letter-spacing: 0; }

/* Sheet */
.sheet { height: 759px; margin-top: 7px; display: flex; }
.gridwrap { width: 1898px; height: 759px; overflow: hidden; background: #fff; }
.cells { border-collapse: separate; border-spacing: 0; table-layout: fixed; width: 1898px; font: 22.600px/26px "Liberation Sans", sans-serif; color: #000; letter-spacing: 0; }
.c0 { width: 48px; } .ca { width: 102px; } .cb { width: 142px; } .cc { width: 122px; } .cd { width: 115px; }
.ce { width: 126px; } .cf { width: 134px; } .cg { width: 134px; } .ch { width: 146px; } .ci { width: 160px; }
.cj { width: 152px; } .ck { width: 89px; } .cl { width: 139px; } .cm { width: 115px; } .cn { width: 114px; } .co { width: 60px; }
th { font: 400 18px/23px "Open Sans", sans-serif; color: #444; background: #f0f0f0; padding: 0; letter-spacing: 0; }
thead th { height: 29px; padding-top: 5px; border-right: 1px solid #dadada; border-bottom: 1px solid #a0a0a0; }
thead th:last-child { border-right: 0; text-align: right; }
tbody th { height: 30px; padding-top: 2px; border-right: 1px solid #a0a0a0; border-bottom: 1px solid #e0e0e0; }
.corner { vertical-align: middle; }
.corner svg { margin: -5px 0 0 24px; }
.hsel { background: #e1e1e1; color: #217346; border-bottom: 3px solid #1e6e42 !important; line-height: 21px; }
.rsel { background: #e1e1e1; color: #217346; border-right: 2px solid #1e6e42 !important; }
td { height: 30px; padding: 0 4px; border-right: 1px solid #e0e0e0; border-bottom: 1px solid #e0e0e0; white-space: nowrap; overflow: visible; vertical-align: bottom; }
td.n { text-align: right; }
.green { background: #b5e6a2; }
.yellow { background: #ff0; }
.red { background: #f00; }
.purple { background: #7a1f72; }
.pink { background: #f2ceef; }
.sel { position: relative; outline: 2px solid #1e6e42; outline-offset: -1px; }
.sel::after { content: ""; position: absolute; right: -3px; bottom: -3px; width: 6px; height: 6px; background: #1e6e42; border: 1px solid #fff; }

.vscroll { flex: 1; background: #f7f5f2; display: flex; flex-direction: column; align-items: center; border-radius: 8px; padding: 4px 0 3px; }
.arrow-up { width: 0; height: 0; border: 5px solid transparent; border-top: 0; border-bottom: 7px solid #666; margin-bottom: 5px; }
.vthumb { width: 7px; height: 708px; background: #6e6e6e; border-radius: 4px; }
.arrow-down { width: 0; height: 0; border: 5px solid transparent; border-bottom: 0; border-top: 7px solid #666; margin-top: auto; margin-bottom: 2px; }

/* Sheet tabs */
.sheetbar { height: 32px; display: flex; align-items: center; padding-left: 27px; }
.navs { display: flex; gap: 22px; width: 89px; }
.sheettab { width: 77px; height: 28px; align-self: flex-start; background: #fff; border-radius: 0 0 5px 5px; box-shadow: 0 1px 2px #0002; display: flex; justify-content: center; padding-top: 6px; color: #222; }
.sheettab b { height: 19px; border-bottom: 2px solid #1e6e42; font-size: 13px; font-weight: 700; white-space: nowrap; }
.tabsep { width: 1px; height: 18px; background: #ccc; margin-left: 4px; }
.plus { margin-left: 42px; }
.hdots { margin-left: 896px; width: 10px; text-align: center; font-size: 14px; color: #333; }
.hscroll { width: 734px; height: 18px; margin-left: 13px; background: #f6f4f1; border-radius: 8px; display: flex; align-items: center; padding: 0 3px 0 5px; }
.arrow-left { width: 0; height: 0; border: 5px solid transparent; border-left: 0; border-right: 6px solid #555; }
.hthumb { width: 674px; height: 9px; margin-left: 6px; background: #6e6e6e; border-radius: 5px; }
.arrow-right { width: 0; height: 0; border: 5px solid transparent; border-right: 0; border-left: 6px solid #666; margin-left: 25px; }

/* Status bar */
.status { height: 22px; background: #f4f4f4; border-top: 1px solid #fff; display: flex; align-items: center; padding-left: 12px; font-size: 11.500px; line-height: 14px; padding-bottom: 1px; }
.acc { margin-left: 18px; }
.acctext { margin-left: 3px; font-weight: 600; color: #333; font-size: 11.200px; }
.st-right { margin-left: auto; display: flex; align-items: center; height: 100%; padding-right: 8px; }
.view { width: 40px; height: 21px; display: flex; align-items: center; justify-content: center; }
.view.on { background: #dfdfdf; }
.zminus { margin-left: 4px; font-size: 15px; width: 12px; }
.zslider { width: 97px; height: 1px; background: #777; margin-left: 1px; display: flex; align-items: center; justify-content: center; }
.ztick { width: 1px; height: 7px; background: #777; margin-left: 18px; }
.zthumb { width: 5px; height: 13px; background: #555; margin-left: 7px; flex: none; }
.zplus { margin-left: 3px; font-size: 15px; width: 16px; text-align: center; }
.zpct { margin-left: 10px; font-size: 11.500px; color: #444; }

/* Taskbar */
.taskbar { height: 48px; background: #f7eee1; border-top: 1px solid #d5cec4; display: grid; grid-template-columns: 661px 1fr auto; align-items: center; }
.weather { display: flex; align-items: center; padding-left: 21px; }
.sun { width: 20px; height: 25px; margin-top: 2px; border-radius: 50%; background: linear-gradient(#f9b42a, #ee7a1b); position: relative; }
.badge { position: absolute; left: 9px; top: -6px; width: 16px; height: 16px; border-radius: 50%; background: #c42b1c; color: #fff; font-size: 10.500px; line-height: 16px; text-align: center; }
.wtext { display: flex; flex-direction: column; margin-left: 9px; font-size: 11.500px; }
.wsub { color: #555; }
.taskcenter { display: flex; align-items: center; }
.tsearch { width: 218px; height: 31px; margin-left: 14px; background: #fcf9f4; border-radius: 16px; box-shadow: 0 1px 2px #0002; display: flex; align-items: center; padding: 0 0 1px 11px; gap: 8px; color: #555; font-size: 13px; }
.dunes { margin-left: auto; margin-right: 4px; }
.app { width: 44px; height: 38px; display: flex; align-items: center; justify-content: center; position: relative; }
.a-first { margin-left: 3px; }
.dot { position: absolute; bottom: 0; left: 19px; width: 6px; height: 3px; border-radius: 2px; background: #8a8a8a; }
.current { width: 48px; margin-left: -2px; background: #fbf8f3; border-radius: 4px; box-shadow: 0 0 1px #0002; }
.bar { position: absolute; bottom: 1px; left: 16px; width: 16px; height: 3px; border-radius: 2px; background: #0f6cbd; }
.tray { display: flex; align-items: center; padding-right: 19px; font-size: 11.500px; color: #333; }
.lang { display: flex; flex-direction: column; align-items: center; margin: 0 1px 0 21px; }
.net { margin-left: 15px; }
.snd { margin-left: 8px; }
.clock { display: flex; flex-direction: column; align-items: flex-end; margin-left: 18px; }
.o-t { font: 700 11px "Open Sans", sans-serif; fill: #fff; text-anchor: middle; }
.sort-a { font: 13px "Open Sans", sans-serif; fill: #2b7cd3; }
.sort-z { font: 13px "Open Sans", sans-serif; fill: #444; }
```
